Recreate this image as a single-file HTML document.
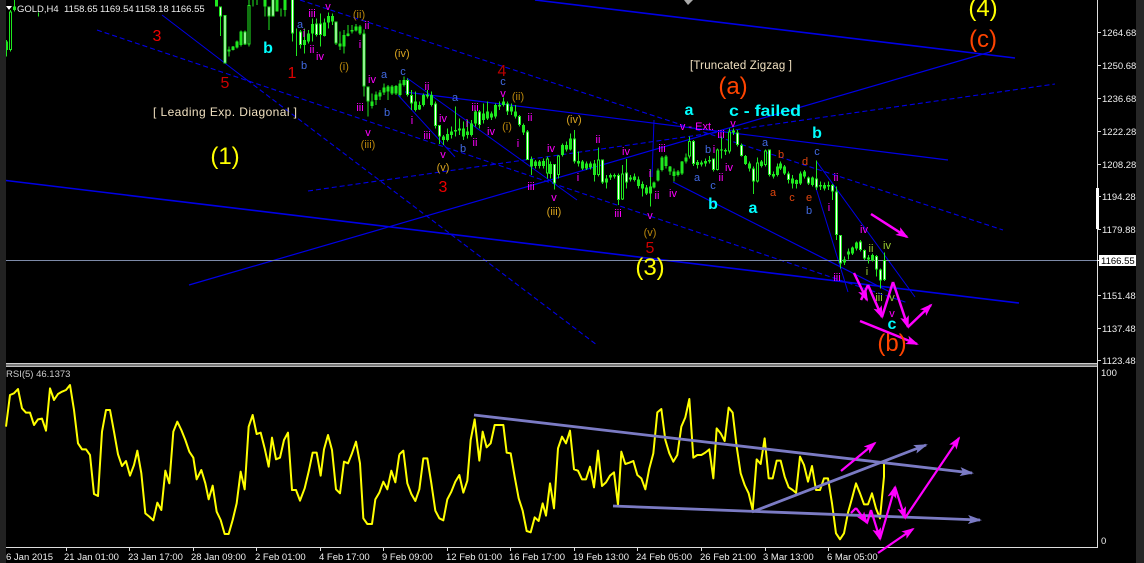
<!DOCTYPE html>
<html><head><meta charset="utf-8"><title>GOLD,H4</title>
<style>
html,body{margin:0;padding:0;background:#000;width:1144px;height:563px;overflow:hidden}
svg{display:block;font-family:"Liberation Sans",sans-serif}
.w,.b,.wi,.bi,.r{fill:none;vector-effect:non-scaling-stroke}
.w,.b,.wi,.bi{shape-rendering:crispEdges}
.w{stroke:#1fe81f;stroke-width:1}
.b{stroke:#1fe81f;stroke-width:3}
.wi{stroke:#fff;stroke-width:1}
.bi{stroke:#000;stroke-width:1}
.r{stroke:#ff0;stroke-width:2;stroke-linejoin:round}
.ax text{font-size:9.5px;fill:#eee}
.sm text{font-size:11px;text-anchor:middle}
.m{fill:#f0f}.bl{fill:#4169e1}.g{fill:#b8860b}.gb{fill:#daa520}.o{fill:#e0450e}.ol{fill:#9acd32}
.big{font-size:24px;text-anchor:middle}
.mid{font-size:16px;text-anchor:middle}
.cy{fill:#0ff;font-weight:bold}
</style></head><body>
<svg width="1144" height="563" viewBox="0 0 1144 563" xmlns="http://www.w3.org/2000/svg">
<defs>
<clipPath id="c"><rect x="6" y="0" width="1091" height="363"/></clipPath>
<marker id="hm" markerUnits="userSpaceOnUse" markerWidth="16" markerHeight="12" refX="11" refY="6" orient="auto"><path d="M0 1.5L13 6L0 10.5L3 6Z" fill="#f0f"/></marker>
<marker id="hp" markerUnits="userSpaceOnUse" markerWidth="18" markerHeight="12" refX="12" refY="6" orient="auto"><path d="M0 1.5L14 6L0 10.5L3 6Z" fill="#7b7bc4"/></marker>
</defs>
<rect width="1144" height="563" fill="#000"/>
<rect x="0" y="0" width="6" height="563" fill="#222"/>
<rect x="1136" y="0" width="8" height="563" fill="#262626"/>

<g clip-path="url(#c)">
<!-- blue lines -->
<g fill="none" stroke="#0000e6">
<path d="M6 180.5L1019 303" stroke-width="1.6"/>
<path d="M535 0L1015 58" stroke-width="1.6"/>
<path d="M189 285L990 52" stroke-width="1.2"/>
<path d="M162 15L247 80" stroke-width="1"/>
<path d="M405 92L948 160" stroke-width="1.2"/>
<path d="M398 95L455 157" stroke-width="1"/>
<path d="M407 78L577 200" stroke-width="1"/>
<path d="M654 120L652 177" stroke-width="1"/>
<path d="M673 182L890 292" stroke-width="1.2"/>
<path d="M816.7 161.7L915 297" stroke-width="1"/>
<path d="M816 188L848 292" stroke-width="1"/>
<g stroke-dasharray="5 3" stroke-width="1.1">
<path d="M97 30L908 303"/>
<path d="M300 0L1003 230"/>
<path d="M308 191L1055 84"/>
<path d="M247 80L597 345"/>
</g>
</g>
<rect x="6" y="260" width="1091" height="1" fill="#7d8aa8"/>
<polygon points="684,0 693,0 688,5" fill="#aaa"/>

<!-- candles segment 1 -->
<g transform="scale(.33333)">
<path class="w" d="M20 120V170M32 30V155M44 0V35M115 38V50M650 0V20M662 20V108M675 45V190M687 140V170M699 138V152M711 122V145M723 92V140M735 92V135M747 0V140M759 0V20M771 0V15M795 0V50M807 20V90M819 0V50M831 0V35M843 25V50M855 0V50M878 0V125M890 85V168M902 90V145M914 85V160M926 90V130M938 55V125M950 55V110M962 40V140M974 55V110M986 38V85M998 40V75M1008 65V135M1020 95V150M1032 90V160M1044 75V110M1056 75V100M1068 72V95M1080 75V105M1092 88V290M1104 260V350M1116 280V325M1128 275V315M1140 270V300M1152 250V285M1164 255V300M1176 255V285M1188 255V285"/>
<path class="b" d="M20 125V150M32 35V150M44 20V30M650 0V20M662 20V50M675 45V190M687 148V155M699 140V150M711 125V142M723 95V135M735 95V133M747 15V133M795 0V20M807 20V50M819 0V50M831 0V35M855 0V30M878 0V100M902 95V135M914 120V135M926 100V125M938 72V100M950 70V105M962 70V105M974 68V108M986 48V68M998 48V65M1008 65V130M1020 130V140M1032 105V140M1044 100V108M1056 90V95M1068 80V92M1080 80V100M1092 100V260M1104 260V305M1116 305V318M1128 283V300M1140 278V290M1152 262V278M1164 260V275M1176 260V280M1188 258V280"/>
<path class="wi" d="M662 23V47M675 48V187M735 98V130M807 23V47M878 0V97M902 98V132M950 73V102M962 73V102M1008 68V127M1092 103V257M1104 263V302M819 0V47"/>
<path class="bi" d="M32 38V147M747 18V130"/>
</g>

<!-- candles segment 2 -->
<g transform="translate(400,60) scale(.33333)">
<path class="w" d="M0 60V110M12 50V80M22 55V110M34 90V150M46 95V155M58 125V150M70 100V140M82 90V115M94 95V140M106 125V205M118 195V252M130 225V255M142 205V245M154 200V235M166 140V230M178 175V225M190 185V240M202 180V235M214 180V230M226 150V200M238 150V205M250 130V190M262 125V180M274 155V180M286 130V175M298 125V150M310 113V140M322 125V165M334 130V165M346 135V175M358 165V200M370 190V225M382 210V300M394 290V345M406 300V325M418 300V325M430 295V325M442 290V355M452 305V355M464 312V388M476 285V355M488 250V290M500 245V275M512 220V272M524 210V310M536 275V320M548 300V330M560 305V330M572 305V328M584 300V365M596 262V350M608 298V372M620 345V385M632 340V360M644 340V355M656 340V435M668 315V420M680 297V385M692 345V365M704 340V365M716 350V385M728 365V410M740 375V405M752 328V440M762 365V385M774 325V365M786 288V335M798 285V325M810 318V345M822 325V365M834 330V350M846 303V345M858 280V310M868 230V295M880 240V318M892 300V325M904 302V320M916 295V320M928 288V310M940 295V335M952 265V332M964 230V295M976 265V285M988 205V280M1000 205V225M1012 210V260M1024 250V290M1036 285V315M1048 305V335M1060 320V402M1072 292V368M1084 300V322M1096 268V320M1108 268V350M1120 335V355M1132 310V350"/>
<path class="b" d="M0 70V105M12 60V75M22 60V105M34 105V130M46 125V150M58 135V148M70 105V135M82 103V110M94 105V135M106 130V198M118 195V230M130 230V240M142 222V240M154 215V225M166 210V215M178 205V212M190 205V230M202 215V225M214 190V225M226 155V190M238 155V195M250 160V180M262 155V175M274 160V172M286 135V170M298 135V140M310 125V135M322 130V155M334 140V155M346 155V170M358 168V195M370 195V218M382 215V300M394 297V320M406 305V318M418 305V318M430 303V318M442 295V340M452 312V342M464 312V370M476 287V345M488 255V285M500 255V268M512 235V268M524 235V305M536 303V310M548 305V325M560 310V325M572 310V322M584 310V345M596 298V345M608 298V368M620 355V368M632 345V352M644 345V350M656 345V420M668 340V418M680 338V368M692 352V358M704 350V360M716 358V378M728 372V385M740 382V400M752 380V400M762 368V382M774 332V362M786 292V330M798 290V318M810 320V335M822 335V348M834 335V345M846 305V340M858 292V305M868 243V290M880 243V312M892 306V315M904 307V313M916 303V310M928 300V305M940 295V330M952 268V330M964 268V272M976 270V275M988 215V275M1000 212V218M1012 218V255M1024 255V288M1036 288V312M1048 310V325M1060 325V365M1072 307V365M1084 305V318M1096 272V315M1108 268V345M1120 342V350M1132 320V345"/>
<path class="wi" d="M22 63V102M34 108V127M106 133V195M118 198V227M238 158V192M322 133V152M358 171V192M382 218V297M464 315V367M524 238V302M608 301V365M656 348V417M680 341V365M880 246V309M940 298V327M1012 221V252M1024 258V285M1060 328V362M1108 271V342"/>
<path class="bi" d="M442 298V337M476 290V342M596 301V342M668 343V415M868 246V287M952 271V327M988 218V272M1072 310V362M1096 275V312"/>
</g>

<!-- candles segment 3 -->
<g transform="translate(780,120) scale(.33333)">
<path class="w" d="M2 125V150M14 135V165M26 155V190M38 165V205M50 178V205M62 155V195M74 150V175M86 170V195M98 170V200M110 122V210M122 185V210M134 188V212M146 185V210M158 192V240M170 200V360M182 345V445M194 410V435M206 385V418M218 380V405M230 365V392M242 360V395M254 388V420M266 405V430M278 400V425M290 405V470M302 445V505M314 398V483"/>
<path class="b" d="M2 130V145M14 140V160M26 160V180M38 175V190M50 180V192M62 160V190M74 155V170M86 172V190M98 172V195M110 175V203M122 195V200M134 195V205M146 195V200M158 195V215M170 215V345M182 345V430M194 418V428M206 395V403M218 382V400M230 368V385M242 365V390M254 390V415M266 412V418M278 405V422M290 408V448M302 448V482M314 420V480"/>
<path class="wi" d="M26 163V177M86 175V187M110 178V200M158 198V212M170 218V342M182 348V427M242 368V387M254 393V412M290 411V445M302 451V479M314 423V477"/>
</g>

<!-- pink arrows main -->
<g fill="none" stroke="#f0f" stroke-width="2.5">
<path d="M871 214L907 237" marker-end="url(#hm)"/>
<path d="M860 321L917 344" marker-end="url(#hm)"/>
<path d="M854 273L867 300" marker-end="url(#hm)"/>
<path d="M861 300L868 285"/>
<path d="M868 285L882 317" marker-end="url(#hm)"/>
<path d="M882 317L893 282"/>
<path d="M893 282L908 327" marker-end="url(#hm)"/>
<path d="M908 327L931 305" marker-end="url(#hm)"/>
</g>

<!-- labels main -->
<g class="sm"><g transform="translate(0,4)">
<text x="300" y="24" class="bl">a</text><text x="304" y="33" class="m">i</text><text x="312" y="13" class="m">iii</text><text x="312" y="49" class="m">ii</text><text x="320" y="56" class="m">iv</text><text x="328" y="6" class="m">v</text><text x="359" y="14" class="g">(ii)</text><text x="367" y="25" class="m">ii</text><text x="360" y="44" class="m">i</text><text x="344" y="66" class="g">(i)</text><text x="304" y="65" class="bl">b</text><text x="372" y="79" class="m">iv</text><text x="384" y="74" class="bl">a</text><text x="360" y="107" class="m">iii</text><text x="387" y="112" class="bl">b</text><text x="368" y="132" class="m">v</text><text x="368" y="144" class="g">(iii)</text>
<text x="402" y="53" class="gb">(iv)</text><text x="403" y="71" class="bl">c</text><text x="427" y="86" class="m">ii</text><text x="455" y="97" class="bl">a</text><text x="443" y="118" class="m">iv</text><text x="412" y="120" class="m">i</text><text x="427" y="135" class="m">iii</text><text x="443" y="154" class="m">v</text><text x="443" y="167" class="gb">(v)</text><text x="463" y="148" class="bl">b</text><text x="475" y="107" class="m">iii</text><text x="467" y="123" class="m">i</text><text x="475" y="142" class="m">ii</text><text x="491" y="131" class="m">iv</text><text x="503" y="81" class="bl">c</text><text x="503" y="93" class="m">v</text><text x="518" y="96" class="g">(ii)</text><text x="507" y="126" class="g">(i)</text><text x="530" y="117" class="m">ii</text><text x="518" y="143" class="m">i</text><text x="531" y="186" class="m">iii</text><text x="551" y="148" class="m">iv</text><text x="574" y="119" class="gb">(iv)</text><text x="598" y="139" class="m">ii</text><text x="626" y="151" class="m">iv</text><text x="578" y="177" class="m">i</text><text x="554" y="197" class="m">v</text><text x="554" y="211" class="gb">(iii)</text><text x="618" y="213" class="m">iii</text><text x="662" y="148" class="m">iii</text><text x="650" y="173" class="m">i</text><text x="657" y="195" class="m">ii</text><text x="673" y="193" class="m">iv</text><text x="650" y="215" class="m">v</text><text x="650" y="232" class="g">(v)</text>
<text x="697" y="126" class="m">v - Ext.</text><text x="721" y="134" class="m">iii</text><text x="733" y="123" class="m">v</text><text x="708" y="149" class="bl">b</text><text x="714" y="149" class="m">i</text><text x="697" y="177" class="bl">a</text><text x="713" y="185" class="bl">c</text><text x="721" y="177" class="m">ii</text><text x="729" y="167" class="m">iv</text><text x="765" y="142" class="bl">a</text><text x="781" y="154" class="o">b</text><text x="773" y="192" class="o">a</text><text x="792" y="197" class="o">c</text><text x="805" y="161" class="o">d</text><text x="817" y="151" class="bl">c</text><text x="809" y="197" class="o">e</text><text x="809" y="210" class="bl">b</text><text x="836" y="177" class="m">ii</text><text x="829" y="207" class="m">i</text><text x="864" y="229" class="m">iv</text><text x="837" y="277" class="m">iii</text><text x="887" y="245" class="ol">iv</text><text x="871" y="248" class="ol">ii</text><text x="867" y="271" class="ol">i</text><text x="879" y="297" class="ol">iii</text><text x="892" y="297" class="ol">v</text><text x="892" y="313" class="m">v</text>
</g></g>

<text x="157" y="41" class="mid" fill="#e00">3</text>
<text x="225" y="88" class="mid" fill="#c00">5</text>
<text x="292" y="78" class="mid" fill="#d00">1</text>
<text x="443" y="192" class="mid" fill="#e00">3</text>
<text x="502" y="76" class="mid" fill="#b00">4</text>
<text x="650" y="253" class="mid" fill="#c00">5</text>
<text x="268" y="53" class="mid cy">b</text>
<text x="689" y="115" class="mid cy">a</text>
<text x="817" y="138" class="mid cy">b</text>
<text x="713" y="209" class="mid cy">b</text>
<text x="753" y="213" class="mid cy">a</text>
<text x="892" y="329" class="mid cy">c</text>
<text x="729" y="116" font-size="16" class="cy" textLength="72" lengthAdjust="spacingAndGlyphs">c - failed</text>
<text x="153" y="116" font-size="12" fill="#f0e0c0" textLength="144">[ Leading Exp. Diagonal ]</text>
<text x="690" y="69" font-size="11.5" fill="#f0e0c0" textLength="102">[Truncated Zigzag ]</text>
<text x="225" y="164" class="big" fill="#ff0">(1)</text>
<text x="650" y="275" class="big" fill="#ff0">(3)</text>
<text x="983" y="16" class="big" fill="#ff0">(4)</text>
<text x="983" y="47" class="big" fill="#f40">(c)</text>
<text x="733" y="94" class="big" fill="#f40">(a)</text>
<text x="892" y="351" class="big" fill="#f40">(b)</text>
</g>

<!-- header -->
<polygon points="6,6 12,6 9,10" fill="#fff"/>
<g font-size="9.5" fill="#eee">
<text x="17" y="12">GOLD,H4</text><text x="64" y="12">1158.65</text><text x="100" y="12">1169.54</text><text x="135" y="12">1158.18</text><text x="171" y="12">1166.55</text>
</g>

<!-- separators and axes -->
<rect x="6" y="363" width="1091" height="1" fill="#ccc"/>
<rect x="6" y="364" width="1091" height="2" fill="#777"/>
<rect x="6" y="366" width="1091" height="1" fill="#bbb"/>
<rect x="1097" y="0" width="1" height="547" fill="#ddd"/>
<rect x="1096" y="188" width="3" height="41" fill="#fff"/>
<rect x="6" y="547" width="1092" height="1" fill="#ddd"/>
<g fill="#ddd">
<rect x="1098" y="32" width="3" height="1"/><rect x="1098" y="65" width="3" height="1"/><rect x="1098" y="98" width="3" height="1"/><rect x="1098" y="131" width="3" height="1"/><rect x="1098" y="164" width="3" height="1"/><rect x="1098" y="196" width="3" height="1"/><rect x="1098" y="229" width="3" height="1"/><rect x="1098" y="295" width="3" height="1"/><rect x="1098" y="328" width="3" height="1"/><rect x="1098" y="360" width="3" height="1"/>
<rect x="66" y="548" width="1" height="3"/><rect x="129" y="548" width="1" height="3"/><rect x="193" y="548" width="1" height="3"/><rect x="256" y="548" width="1" height="3"/><rect x="320" y="548" width="1" height="3"/><rect x="383" y="548" width="1" height="3"/><rect x="447" y="548" width="1" height="3"/><rect x="510" y="548" width="1" height="3"/><rect x="574" y="548" width="1" height="3"/><rect x="637" y="548" width="1" height="3"/><rect x="701" y="548" width="1" height="3"/><rect x="765" y="548" width="1" height="3"/><rect x="828" y="548" width="1" height="3"/>
</g>
<g class="ax">
<text x="1102" y="36">1264.68</text><text x="1102" y="69">1250.68</text><text x="1102" y="102">1236.68</text><text x="1102" y="135">1222.28</text><text x="1102" y="168">1208.28</text><text x="1102" y="200">1194.28</text><text x="1102" y="233">1179.88</text><text x="1102" y="299">1151.48</text><text x="1102" y="332">1137.48</text><text x="1102" y="364">1123.48</text>
<text x="1101" y="376">100</text><text x="1101" y="544">0</text>
<text x="6" y="377" style="fill:#ccc">RSI(5) 46.1373</text>
<text x="6" y="560">6 Jan 2015</text><text x="64" y="560">21 Jan 01:00</text><text x="128" y="560">23 Jan 17:00</text><text x="191" y="560">28 Jan 09:00</text><text x="255" y="560">2 Feb 01:00</text><text x="319" y="560">4 Feb 17:00</text><text x="382" y="560">9 Feb 09:00</text><text x="446" y="560">12 Feb 01:00</text><text x="509" y="560">16 Feb 17:00</text><text x="573" y="560">19 Feb 13:00</text><text x="636" y="560">24 Feb 05:00</text><text x="700" y="560">26 Feb 21:00</text><text x="763" y="560">3 Mar 13:00</text><text x="827" y="560">6 Mar 05:00</text>
</g>
<rect x="1099" y="255" width="37" height="11" fill="#fff"/>
<rect x="1097" y="260" width="3" height="1" fill="#fff"/>
<text x="1101" y="264" font-size="9.5" fill="#000">1166.55</text>

<!-- RSI -->
<g transform="translate(0,360) scale(.33333)">
<polyline class="r" points="18,200 30,105 42,100 54,87 66,145 78,158 90,158 102,195 114,178 126,176 138,212 150,85 162,120 174,102 186,95 198,90 210,75 222,150 234,250 246,268 258,268 270,285 282,402 294,408 306,215 318,150 330,150 342,215 354,283 366,318 378,303 390,347 402,315 412,272 424,340 436,460 448,470 460,481 472,428 484,450 496,332 508,370 520,215 532,185 544,210 556,240 568,275 580,293 590,358 604,330 616,370 626,418 638,377 650,455 662,480 674,522 686,522 698,480 710,430 722,335 734,388 746,200 758,165 770,222 782,218 794,265 806,320 816,233 828,298 840,293 852,240 864,218 876,390 888,390 900,422 914,385 926,335 938,278 950,278 962,347 972,268 984,225 996,270 1008,388 1020,400 1032,305 1044,310 1056,280 1068,245 1080,310 1090,475 1102,492 1116,492 1126,418 1138,398 1150,365 1162,388 1174,332 1186,367 1198,283"/>
</g>
<g transform="translate(400,360) scale(.33333)">
<polyline class="r" points="-2,283 10,272 22,370 34,402 46,423 58,388 70,295 82,295 94,370 106,452 118,475 130,481 142,418 154,395 166,365 178,345 190,398 202,362 212,240 224,178 238,302 248,215 260,262 272,250 284,195 296,195 310,195 320,278 332,280 344,350 356,415 368,452 380,513 392,517 404,472 416,483 428,430 438,467 450,370 462,445 474,265 486,230 498,250 510,212 522,328 534,332 546,358 558,358 570,320 582,382 594,272 606,378 618,367 630,347 642,337 654,435 664,275 676,312 688,308 700,303 712,345 724,355 736,388 748,325 760,280 772,157 784,147 796,240 808,280 820,305 832,285 844,200 856,172 868,117 880,293 892,285 904,285 916,278 928,268 940,355 950,205 962,220 974,243 986,143 998,158 1010,260 1022,340 1034,375 1046,400 1058,450 1070,298 1082,312 1094,235 1106,355 1118,355 1130,302 1142,302 1154,350 1166,382 1178,390 1190,400"/>
</g>
<g transform="translate(744,360) scale(.33333)">
<polyline class="r" points="156,400 168,290 180,315 192,365 204,318 216,390 228,390 240,355 252,355 264,430 276,520 288,538 300,520 312,458 324,415 336,370 348,400 360,433 372,433 384,400 396,445 408,475 420,350 420,310"/>
</g>
<g fill="none" stroke="#7b7bc4" stroke-width="2.8">
<path d="M474 415L972 473" marker-end="url(#hp)"/>
<path d="M613 506L980 520" marker-end="url(#hp)"/>
<path d="M752 512L926 445" marker-end="url(#hp)"/>
</g>
<g fill="none" stroke="#f0f" stroke-width="2.2">
<path d="M841 471L875 443" marker-end="url(#hm)"/>
<path d="M851 513L856 508"/>
<path d="M856 508L867 523" marker-end="url(#hm)"/>
<path d="M867 523L871 510"/>
<path d="M871 510L880 539" marker-end="url(#hm)"/>
<path d="M880 539L895 487" marker-end="url(#hm)"/>
<path d="M895 487L905 518" marker-end="url(#hm)"/>
<path d="M905 518L959 438" marker-end="url(#hm)"/>
<path d="M878 553L913 529" marker-end="url(#hm)"/>
</g>
</svg>
</body></html>
